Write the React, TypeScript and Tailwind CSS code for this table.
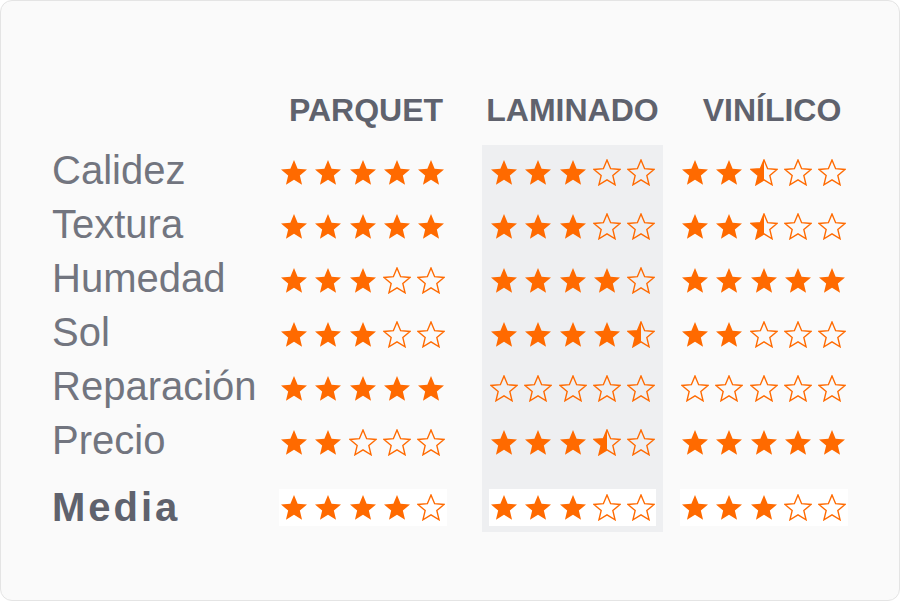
import { useId } from "react";

type Rating = number;

const ORANGE = "#ff6a00";

// star polygon, 26 x 24.7, top point at y=0
const STAR =
  "13,0 16.62,8.69 26,9.45 18.85,15.57 21.04,24.73 13,19.82 4.96,24.73 7.15,15.57 0,9.45 9.38,8.69";

function Star({ fill }: { fill: "full" | "half" | "empty" }) {
  const id = useId();
  return (
    <svg width="28" height="27" viewBox="-1 -1 28 27" className="shrink-0">
      {fill === "full" && <polygon points={STAR} fill={ORANGE} />}
      {fill === "half" && (
        <>
          <defs>
            <clipPath id={id}>
              <rect x="-1" y="-1" width="14" height="27" />
            </clipPath>
          </defs>
          <polygon points={STAR} fill={ORANGE} clipPath={`url(#${id})`} />
        </>
      )}
      {fill !== "full" && (
        <polygon
          points={STAR}
          fill="none"
          stroke={ORANGE}
          strokeWidth="1.4"
          strokeLinejoin="miter"
        />
      )}
    </svg>
  );
}

function Stars({ value }: { value: Rating }) {
  return (
    <div className="flex gap-[6.3px] px-[1px]">
      {[1, 2, 3, 4, 5].map((i) => (
        <Star
          key={i}
          fill={value >= i ? "full" : value >= i - 0.5 ? "half" : "empty"}
        />
      ))}
    </div>
  );
}

const criteria = ["Calidez", "Textura", "Humedad", "Sol", "Reparación", "Precio"];

const columns = [
  { name: "PARQUET", ratings: [5, 5, 3, 3, 5, 2], media: 4 },
  { name: "LAMINADO", ratings: [3, 3, 4, 4.5, 0, 3.5], media: 3 },
  { name: "VINÍLICO", ratings: [2.5, 2.5, 5, 2, 0, 5], media: 3 },
];

function RatingRows({ ratings, media }: { ratings: Rating[]; media: Rating }) {
  return (
    <>
      {ratings.map((r, i) => (
        <div key={i} className="h-[54px] flex items-center">
          <Stars value={r} />
        </div>
      ))}
      <div className="mt-[20px] h-[37px] flex items-center bg-white">
        <Stars value={media} />
      </div>
    </>
  );
}

export default function App() {
  return (
    <div className="w-[900px] h-[601px] bg-white">
      <div
        className="w-full h-full rounded-[12px] border border-[#e4e4e4] bg-[#fafafa] pt-[89px] pl-[51px] flex"
        style={{ fontFamily: '"Liberation Sans", Arial, sans-serif' }}
      >
        {/* criteria labels */}
        <div className="w-[227px] flex flex-col">
          <div className="h-[40px] mb-[15px]" />
          {criteria.map((c) => (
            <div key={c} className="h-[54px] text-[40px] leading-[50px] text-[#72757f]">
              {c}
            </div>
          ))}
          <div className="mt-[20px] h-[37px] text-[40px] leading-[37px] font-bold tracking-[3px] text-[#5f626d]">
            Media
          </div>
        </div>

        {/* parquet */}
        <div className="w-[168px] flex flex-col">
          <div className="h-[40px] mb-[15px] pl-[6px] text-center text-[32px] leading-[40px] font-bold text-[#5f626d]">
            {columns[0].name}
          </div>
          <RatingRows ratings={columns[0].ratings} media={columns[0].media} />
        </div>

        {/* laminado */}
        <div className="w-[181px] ml-[35px] flex flex-col">
          <div className="h-[40px] mb-[15px] text-center text-[32px] leading-[40px] font-bold text-[#5f626d]">
            {columns[1].name}
          </div>
          <div className="bg-[#eeeff1] px-[7px] pb-[6px]">
            <RatingRows ratings={columns[1].ratings} media={columns[1].media} />
          </div>
        </div>

        {/* vinilico */}
        <div className="w-[168px] ml-[17px] flex flex-col">
          <div className="h-[40px] mb-[15px] pl-[16px] text-center text-[32px] leading-[40px] font-bold text-[#5f626d]">
            {columns[2].name}
          </div>
          <RatingRows ratings={columns[2].ratings} media={columns[2].media} />
        </div>
      </div>
    </div>
  );
}
